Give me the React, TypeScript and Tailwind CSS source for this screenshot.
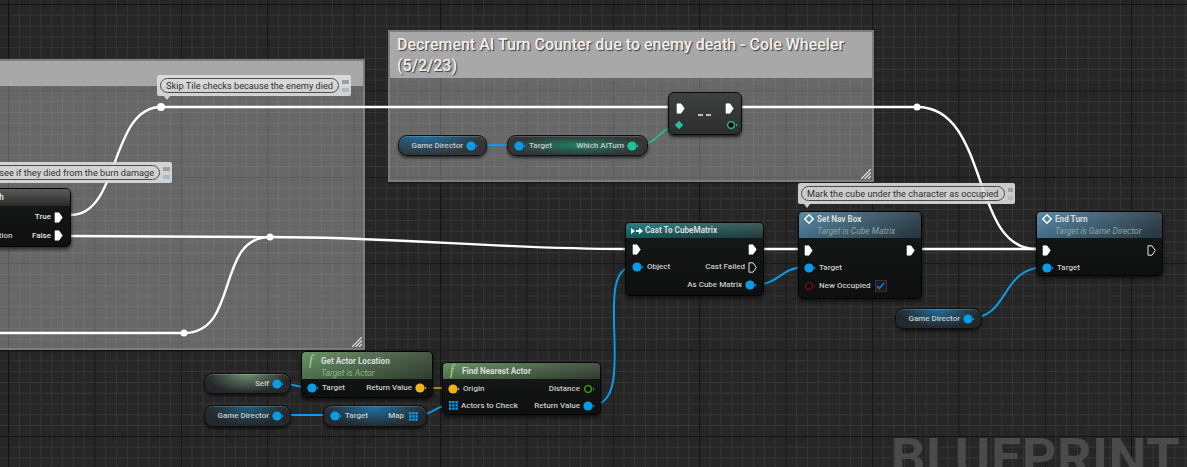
import type { ReactNode } from 'react'

const font = "font-['Roboto',sans-serif]"

function ExecPin({ hollow = false }: { hollow?: boolean }) {
  return (
    <svg width="9" height="11" viewBox="0 0 9 11" className="shrink-0">
      <path
        d="M1 .8H5L8.300 5.500 5 10.200H1Z"
        fill={hollow ? 'none' : '#fff'}
        stroke="#fff"
        strokeWidth={hollow ? 0.9 : 0.6}
        strokeLinejoin="round"
      />
    </svg>
  )
}

function DataPin({ color, ring = false }: { color: string; ring?: boolean }) {
  return (
    <svg width="12" height="10" viewBox="0 0 12 10" className="shrink-0">
      <circle cx="5" cy="5" r={ring ? 3.4 : 4.6} fill={ring ? '#0b0b0b' : color} stroke={color} strokeWidth={ring ? 1.3 : 0} />
      <path d="M10 3.600 11.600 5 10 6.400Z" fill={color} />
    </svg>
  )
}

function ArrayPin() {
  return (
    <svg width="9" height="9" viewBox="0 0 9 9" className="shrink-0">
      {[0, 3.2, 6.4].map((y) =>
        [0, 3.2, 6.4].map((x) => <rect key={`${x}-${y}`} x={x} y={y} width="2.4" height="2.4" fill="#0a9be8" />),
      )}
    </svg>
  )
}

function FunctionIcon() {
  return <span className="w-[12px] text-[14px] leading-none text-[#a5d69b] italic font-['Liberation_Serif',serif]">f</span>
}

function NavIcon() {
  return (
    <svg width="10" height="10" viewBox="0 0 12 12" className="shrink-0">
      <path d="M6 1 11 6 6 11 1 6Z" fill="none" stroke="#fff" strokeWidth="1.8" />
    </svg>
  )
}

function CastIcon() {
  return (
    <svg width="12" height="8" viewBox="0 0 12 8" className="shrink-0">
      <path d="M0 1 4 4 0 7Z" fill="#fff" />
      <path d="M5 3h3v2H5Z" fill="#fff" />
      <path d="M8 .8 12 4 8 7.200Z" fill="#fff" />
    </svg>
  )
}

function Label({ children, className = '' }: { children: ReactNode; className?: string }) {
  return <span className={`text-[8px] leading-none font-medium whitespace-nowrap text-[#c9cccb] ${className}`}>{children}</span>
}

function Row({ left, right, className = 'h-[18px]' }: { left?: ReactNode; right?: ReactNode; className?: string }) {
  return (
    <div className={`flex items-center justify-between ${className}`}>
      <div className="flex items-center gap-[3px]">{left}</div>
      <div className="flex items-center gap-[3px]">{right}</div>
    </div>
  )
}

function Pill({ className, glow, children }: { className: string; glow: string; children: ReactNode }) {
  return (
    <div
      className={`absolute flex items-center rounded-[9px] border border-[#0d0e0e] shadow-[inset_0_1px_0_rgba(255,255,255,0.18),0_2px_3px_rgba(0,0,0,0.6)] ${glow} ${className}`}
    >
      {children}
    </div>
  )
}

function Bubble({ className, text, pointer = 'left-[7px]' }: { className: string; text: string; pointer?: string }) {
  return (
    <div className={`absolute flex items-center gap-[3px] rounded-[2px] bg-[#dedede]/90 pr-[2px] pl-[3px] ${className}`}>
      <div className="flex h-[15px] flex-1 items-center justify-end rounded-full border border-[#4b4b4b] px-[5px]">
        <span className="text-[9.2px] leading-none whitespace-nowrap text-[#303030]">{text}</span>
      </div>
      <div className="flex w-[7px] flex-col gap-[4px]">
        <div className="h-[4px] bg-[#9aa0a6]" />
        <div className="h-[4px] bg-[#a9bccb]" />
      </div>
      <div className={`absolute top-full h-0 w-0 border-x-[3px] border-t-[4px] border-x-transparent border-t-[#dedede]/90 ${pointer}`} />
    </div>
  )
}

function Comment({ className, header, title }: { className: string; header: string; title?: string }) {
  return (
    <div className={`absolute border-2 border-[#7d7d7d] bg-white/30 shadow-[0_1px_2px_rgba(0,0,0,0.5)] ${className}`}>
      <div className={`bg-[#a8a8a8] px-[7px] pt-[3px] ${header}`}>
        {title && (
          <p className="text-[16px] leading-[20.5px] font-medium text-[#f0f0f0] [text-shadow:1px_1px_1px_rgba(0,0,0,0.65)]">
            {title}
          </p>
        )}
      </div>
      <svg width="10" height="10" viewBox="0 0 10 10" className="absolute right-[1px] bottom-[1px]">
        <path d="M0 10 10 0M3.500 10 10 3.500M7 10 10 7" stroke="#e8e8e8" strokeWidth="1.2" />
      </svg>
    </div>
  )
}

const nodeBase =
  'absolute overflow-hidden rounded-[5px] border border-[#050505] bg-gradient-to-b from-[#171a19] to-[#0e0f0f] shadow-[0_2px_4px_rgba(0,0,0,0.7)]'
const blueHeader = 'bg-[linear-gradient(180deg,rgba(255,255,255,0.08),rgba(0,0,0,0.15)),linear-gradient(90deg,#4f819f,#2b3b47)]'
const greenHeader = 'bg-[linear-gradient(180deg,rgba(255,255,255,0.08),rgba(0,0,0,0.2)),linear-gradient(90deg,#5f8a5b,#3b4a39)]'
const titleClass = 'text-[8.2px] leading-none font-bold whitespace-nowrap text-[#d8dcdb]'
const subClass = 'text-[8.5px] leading-none italic whitespace-nowrap'

function Wires() {
  const white = [
    'M71 215C120 215 110 107 161 107',
    'M161 107H669',
    'M738 107H917',
    'M917 107C990 107 970 249 1036 249',
    'M71 236 270 237',
    'M270 237C400 237 500 249 625 249',
    'M0 333H184',
    'M184 333C240 333 215 237 270 237',
    'M757 249H798',
    'M916 249H1036',
  ]
  const blue = [
    'M475 145H513',
    'M277 383C295 383 295 388 313 388',
    'M279 415H335',
    'M418 415C435 415 435 405 450 405',
    'M592 405C640 405 590 267 633 267',
    'M753 285C780 285 780 267 806 267',
    'M970 318C1010 318 1000 267 1046 267',
  ]
  return (
    <svg width="1187" height="467" viewBox="0 0 1187 467" fill="none" className="absolute inset-0">
      {white.map((d) => (
        <path key={d} d={d} stroke="#fff" strokeWidth="2.4" />
      ))}
      {blue.map((d) => (
        <path key={d} d={d} stroke="#0a9be8" strokeWidth="2" />
      ))}
      <path d="M636 145C660 145 660 125 680 125" stroke="#1fc39a" strokeWidth="1.6" />
      <path d="M424 388H452" stroke="#e0a912" strokeWidth="1.6" />
      <circle cx="161" cy="107" r="4" fill="#fff" />
      <circle cx="270" cy="237" r="3.500" fill="#fff" />
      <circle cx="184" cy="333" r="3.500" fill="#fff" />
      <circle cx="917" cy="107" r="3.500" fill="#fff" />
    </svg>
  )
}

export default function App() {
  return (
    <div
      className={`relative h-[467px] w-[1187px] overflow-hidden bg-[#262626] ${font} [background-image:linear-gradient(#121212_1px,transparent_1px),linear-gradient(90deg,#121212_1px,transparent_1px),linear-gradient(#353535_1px,transparent_1px),linear-gradient(90deg,#353535_1px,transparent_1px)] [background-position:8px_4px] [background-size:86.4px_86.4px,86.4px_86.4px,10.8px_10.8px,10.8px_10.8px]`}
    >
      {/* comment boxes */}
      <Comment className="top-[59px] left-[-40px] h-[291px] w-[405px]" header="h-[25px]" />
      <Comment
        className="top-[30px] left-[388px] h-[152px] w-[486px]"
        header="h-[46px]"
        title="Decrement AI Turn Counter due to enemy death - Cole Wheeler (5/2/23)"
      />

      <Wires />

      {/* branch, clipped by the left edge */}
      <div className={`${nodeBase} top-[188px] left-[-60px] h-[59px] w-[131px]`}>
        <div className="flex h-[17px] items-center bg-[linear-gradient(180deg,#5a5a5a,#2a2a2a)] pl-[37px]">
          <span className={titleClass}>Branch</span>
        </div>
        <div className="pt-[1px] pr-[7px] pl-[8px]">
          <Row className="mt-[1px] h-[18px]" right={<><Label className="text-[#e2e2e2]">True</Label><ExecPin /></>} />
          <Row
            className="h-[19px]"
            left={<Label className="ml-[29px]">Condition</Label>}
            right={<><Label className="text-[#e2e2e2]">False</Label><ExecPin /></>}
          />
        </div>
      </div>

      {/* decrement */}
      <Pill className="top-[135px] left-[398px] h-[21px] w-[89px] justify-end gap-[3px] pr-[8px]" glow="bg-[radial-gradient(ellipse_at_30%_0%,#1f6f9f_0%,#333638_70%)]">
        <Label>Game Director</Label>
        <DataPin color="#0a9be8" />
      </Pill>
      <Pill className="top-[135px] left-[507px] h-[21px] w-[141px] justify-between pr-[8px] pl-[6px]" glow="bg-[radial-gradient(ellipse_at_50%_50%,#1f7f66_0%,#333638_70%)]">
        <div className="flex items-center gap-[3px]">
          <DataPin color="#0a9be8" />
          <Label>Target</Label>
        </div>
        <div className="flex items-center gap-[3px]">
          <Label>Which AITurn</Label>
          <DataPin color="#1fc39a" />
        </div>
      </Pill>
      <div className="absolute top-[92px] left-[668px] h-[43px] w-[74px] rounded-[6px] border border-[#0b0b0b] bg-gradient-to-b from-[#3f4140] to-[#2c2d2d] px-[7px] shadow-[0_2px_3px_rgba(0,0,0,0.7)]">
        <Row className="h-[29px] pt-[1px]" left={<ExecPin />} right={<ExecPin />} />
        <div className="-mt-[2px] -mr-[4px] flex items-center justify-between">
          <div className="h-[6px] w-[6px] rotate-45 bg-[#1fc39a]" />
          <DataPin color="#1fc39a" ring />
        </div>
        <div className="absolute top-[21px] left-[29px] flex gap-[3px]">
          <div className="h-[2px] w-[5px] bg-[#bdbdbd]" />
          <div className="h-[2px] w-[5px] bg-[#bdbdbd]" />
        </div>
      </div>

      {/* cast */}
      <div className={`${nodeBase} top-[222px] left-[625px] h-[74px] w-[139px]`}>
        <div className="flex h-[15px] items-center gap-[2px] bg-[linear-gradient(180deg,rgba(255,255,255,0.1),rgba(0,0,0,0.25)),linear-gradient(90deg,#137474,#2d4a4a)] pl-[5px]">
          <CastIcon />
          <span className={titleClass}>Cast To CubeMatrix</span>
        </div>
        <div className="pt-[2px] pr-[6px] pl-[6px]">
          <Row left={<ExecPin />} right={<ExecPin />} />
          <Row left={<><DataPin color="#0a9be8" /><Label>Object</Label></>} right={<><Label>Cast Failed</Label><ExecPin hollow /></>} />
          <Row right={<><Label>As Cube Matrix</Label><DataPin color="#0a9be8" /></>} />
        </div>
      </div>

      {/* set nav box */}
      <div className={`${nodeBase} top-[211px] left-[798px] h-[88px] w-[124px]`}>
        <div className={`h-[26px] pt-[1px] pl-[5px] ${blueHeader}`}>
          <div className="flex h-[12px] items-center gap-[3px]">
            <NavIcon />
            <span className={titleClass}>Set Nav Box</span>
          </div>
          <p className={`${subClass} mt-[2px] pl-[13px] text-[#8fa69a]`}>Target is Cube Matrix</p>
        </div>
        <div className="pt-[3px] pr-[6px] pl-[5px]">
          <Row left={<ExecPin />} right={<ExecPin />} />
          <Row left={<><DataPin color="#0a9be8" /><Label>Target</Label></>} />
          <Row
            left={
              <>
                <DataPin color="#7a0f0f" ring />
                <Label>New Occupied</Label>
                <div className="ml-[1px] flex h-[12px] w-[12px] items-center justify-center border border-[#333] bg-[#1a1d20]">
                  <svg width="9" height="8" viewBox="0 0 9 8" fill="none">
                    <path d="M1 4.200 3.300 6.500 8 1" stroke="#1470d8" strokeWidth="1.8" />
                  </svg>
                </div>
              </>
            }
          />
        </div>
      </div>

      {/* end turn */}
      <div className={`${nodeBase} top-[211px] left-[1036px] h-[65px] w-[127px]`}>
        <div className={`h-[26px] pt-[1px] pl-[5px] ${blueHeader}`}>
          <div className="flex h-[12px] items-center gap-[3px]">
            <NavIcon />
            <span className={titleClass}>End Turn</span>
          </div>
          <p className={`${subClass} mt-[2px] pl-[13px] text-[#8fa69a]`}>Target is Game Director</p>
        </div>
        <div className="pt-[3px] pr-[6px] pl-[5px]">
          <Row left={<ExecPin />} right={<ExecPin hollow />} />
          <Row left={<><DataPin color="#0a9be8" /><Label>Target</Label></>} />
        </div>
      </div>

      <Pill className="top-[308px] left-[895px] h-[21px] w-[87px] justify-end gap-[3px] pr-[6px]" glow="bg-[radial-gradient(ellipse_at_50%_0%,#1f6f9f_0%,#24282a_70%)]">
        <Label>Game Director</Label>
        <DataPin color="#0a9be8" />
      </Pill>

      {/* actor lookup */}
      <Pill className="top-[373px] left-[204px] h-[21px] w-[87px] justify-end gap-[3px] pr-[6px]" glow="bg-[radial-gradient(ellipse_at_50%_0%,#6f8f70_0%,#24282a_70%)]">
        <Label>Self</Label>
        <DataPin color="#0a9be8" />
      </Pill>
      <Pill className="top-[405px] left-[204px] h-[22px] w-[87px] justify-end gap-[3px] pr-[6px]" glow="bg-[radial-gradient(ellipse_at_50%_0%,#1f5f80_0%,#24282a_70%)]">
        <Label>Game Director</Label>
        <DataPin color="#0a9be8" />
      </Pill>
      <Pill className="top-[405px] left-[323px] h-[22px] w-[104px] justify-between pr-[8px] pl-[6px]" glow="bg-[radial-gradient(ellipse_at_50%_10%,#1f6f9f_0%,#24282a_75%)]">
        <div className="flex items-center gap-[3px]">
          <DataPin color="#0a9be8" />
          <Label>Target</Label>
        </div>
        <div className="flex items-center gap-[5px]">
          <Label>Map</Label>
          <ArrayPin />
        </div>
      </Pill>

      <div className={`${nodeBase} top-[351px] left-[301px] h-[47px] w-[132px]`}>
        <div className={`h-[27px] pt-[2px] pl-[7px] ${greenHeader}`}>
          <div className="flex items-center">
            <FunctionIcon />
            <span className={titleClass}>Get Actor Location</span>
          </div>
          <p className={`${subClass} pt-[1px] pl-[12px] text-[#8fb585]`}>Target is Actor</p>
        </div>
        <div className="pr-[5px] pl-[5px]">
          <Row
            left={<><DataPin color="#0a9be8" /><Label>Target</Label></>}
            right={<><Label>Return Value</Label><DataPin color="#f0b418" /></>}
          />
        </div>
      </div>

      <div className={`${nodeBase} top-[362px] left-[442px] h-[53px] w-[159px]`}>
        <div className={`flex h-[16px] items-center pl-[7px] ${greenHeader}`}>
          <FunctionIcon />
          <span className={titleClass}>Find Nearest Actor</span>
        </div>
        <div className="pt-[1px] pr-[5px] pl-[5px]">
          <Row
            className="h-[17px]"
            left={<><DataPin color="#f0b418" /><Label>Origin</Label></>}
            right={<><Label>Distance</Label><DataPin color="#35b000" ring /></>}
          />
          <Row
            className="h-[17px]"
            left={<><span className="ml-[1px] flex"><ArrayPin /></span><Label>Actors to Check</Label></>}
            right={<><Label>Return Value</Label><DataPin color="#0a9be8" /></>}
          />
        </div>
      </div>

      {/* comment bubbles */}
      <Bubble className="top-[75px] left-[157px] h-[21px] w-[194px]" text="Skip Tile checks because the enemy died" />
      <Bubble className="top-[162px] left-[-60px] h-[21px] w-[232px]" text="Check to see if they died from the burn damage" />
      <Bubble className="top-[183px] left-[798px] h-[21px] w-[217px]" text="Mark the cube under the character as occupied" pointer="left-[6px]" />

      {/* watermark */}
      <div className="absolute top-[431px] left-[891px] text-[54px] leading-none font-bold tracking-[0.5px] whitespace-nowrap text-[#4a4a4a]">
        BLUEPRINT
      </div>
    </div>
  )
}
